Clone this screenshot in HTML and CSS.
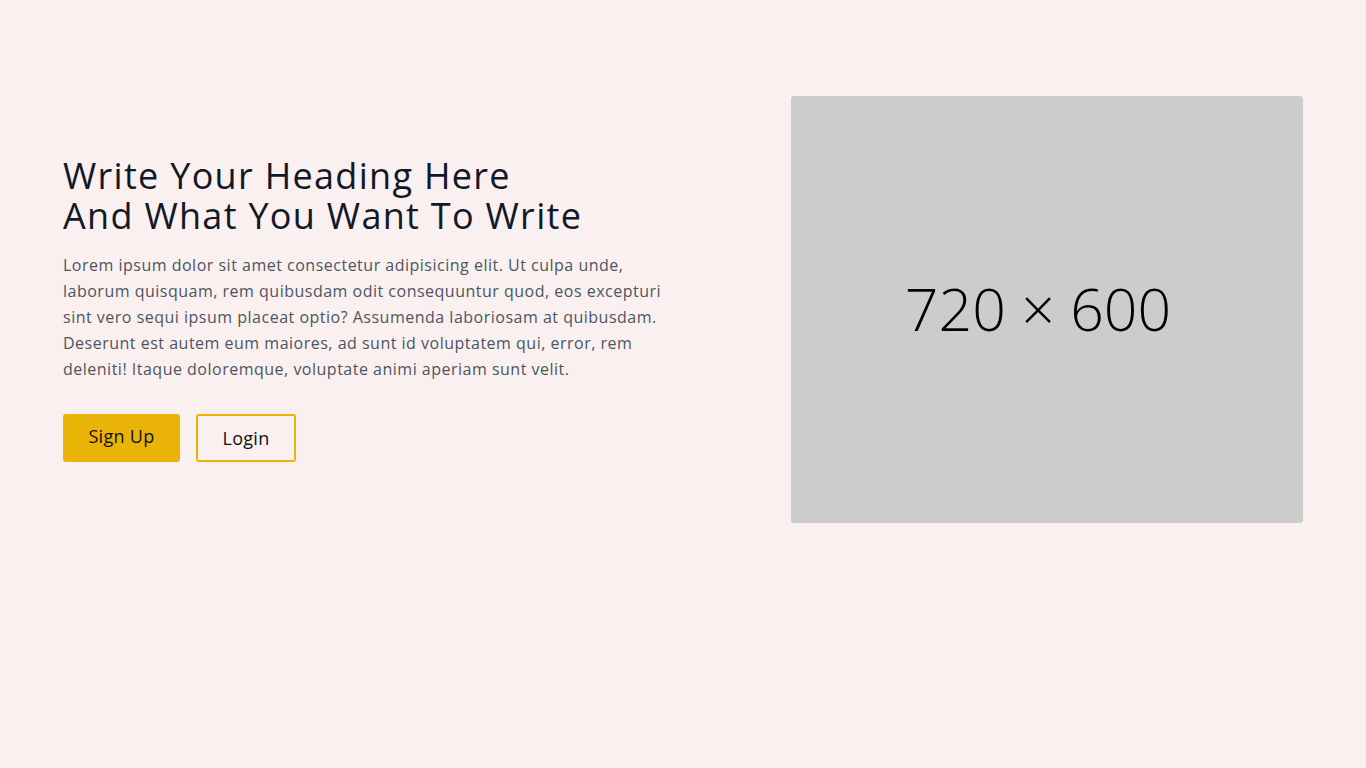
FILE: index.html
```html
<!DOCTYPE html>
<html lang="en">
<head>
<meta charset="utf-8">
<title>Hero</title>
<link rel="stylesheet" href="styles.css">
</head>
<body>
<section class="hero">
  <div class="hero-text">
    <h1 class="hero-title">Write Your Heading Here<br>And What You Want To Write</h1>
    <p class="hero-copy">Lorem ipsum dolor sit amet consectetur adipisicing elit. Ut culpa unde, laborum quisquam, rem quibusdam odit consequuntur quod, eos excepturi sint vero sequi ipsum placeat optio? Assumenda laboriosam at quibusdam. Deserunt est autem eum maiores, ad sunt id voluptatem qui, error, rem deleniti! Itaque doloremque, voluptate animi aperiam sunt velit.</p>
    <div class="hero-actions">
      <a class="btn btn-primary" href="#">Sign Up</a>
      <a class="btn btn-outline" href="#">Login</a>
    </div>
  </div>
  <div class="hero-image">
    <span class="placeholder-label">720 × 600</span>
  </div>
</section>
</body>
</html>
```
FILE: styles.css
```css
* { box-sizing: border-box; }
html, body { margin: 0; padding: 0; }
body {
  background: #faf0ef;
  font-family: "Open Sans", "DejaVu Sans", sans-serif;
  min-height: 768px;
}
.hero {
  display: flex;
  align-items: center;
  justify-content: space-between;
  padding: 94px 63px 96px;
}
.hero-text {
  width: 616px;
}
.hero-title {
  margin: 0 0 16px;
  font-size: 36px;
  line-height: 40px;
  font-weight: 500;
  letter-spacing: 1.3px;
  color: #111827;
}
.hero-copy {
  margin: 0 0 32px;
  font-size: 16px;
  line-height: 26px;
  letter-spacing: 0.5px;
  color: #4b5563;
}
.hero-actions {
  display: flex;
  gap: 16px;
}
.btn {
  display: inline-flex;
  align-items: center;
  justify-content: center;
  height: 48px;
  border-radius: 3px;
  font-size: 18px;
  letter-spacing: 0.3px;
  color: #111;
  text-decoration: none;
}
.btn-primary {
  width: 117px;
  background: #eab308;
  padding-bottom: 4px;
}
.btn-outline {
  width: 100px;
  border: 2px solid #eab308;
}
.hero-image {
  width: 512px;
  height: 427px;
  margin-top: 2px;
  background: #cccccc;
  border-radius: 3px;
  display: flex;
  align-items: center;
  justify-content: center;
  padding: 0 18px 4px 0;
}
.placeholder-label {
  font-family: "Open Sans", sans-serif;
  font-weight: 300;
  font-size: 59px;
  color: #000;
}
```
